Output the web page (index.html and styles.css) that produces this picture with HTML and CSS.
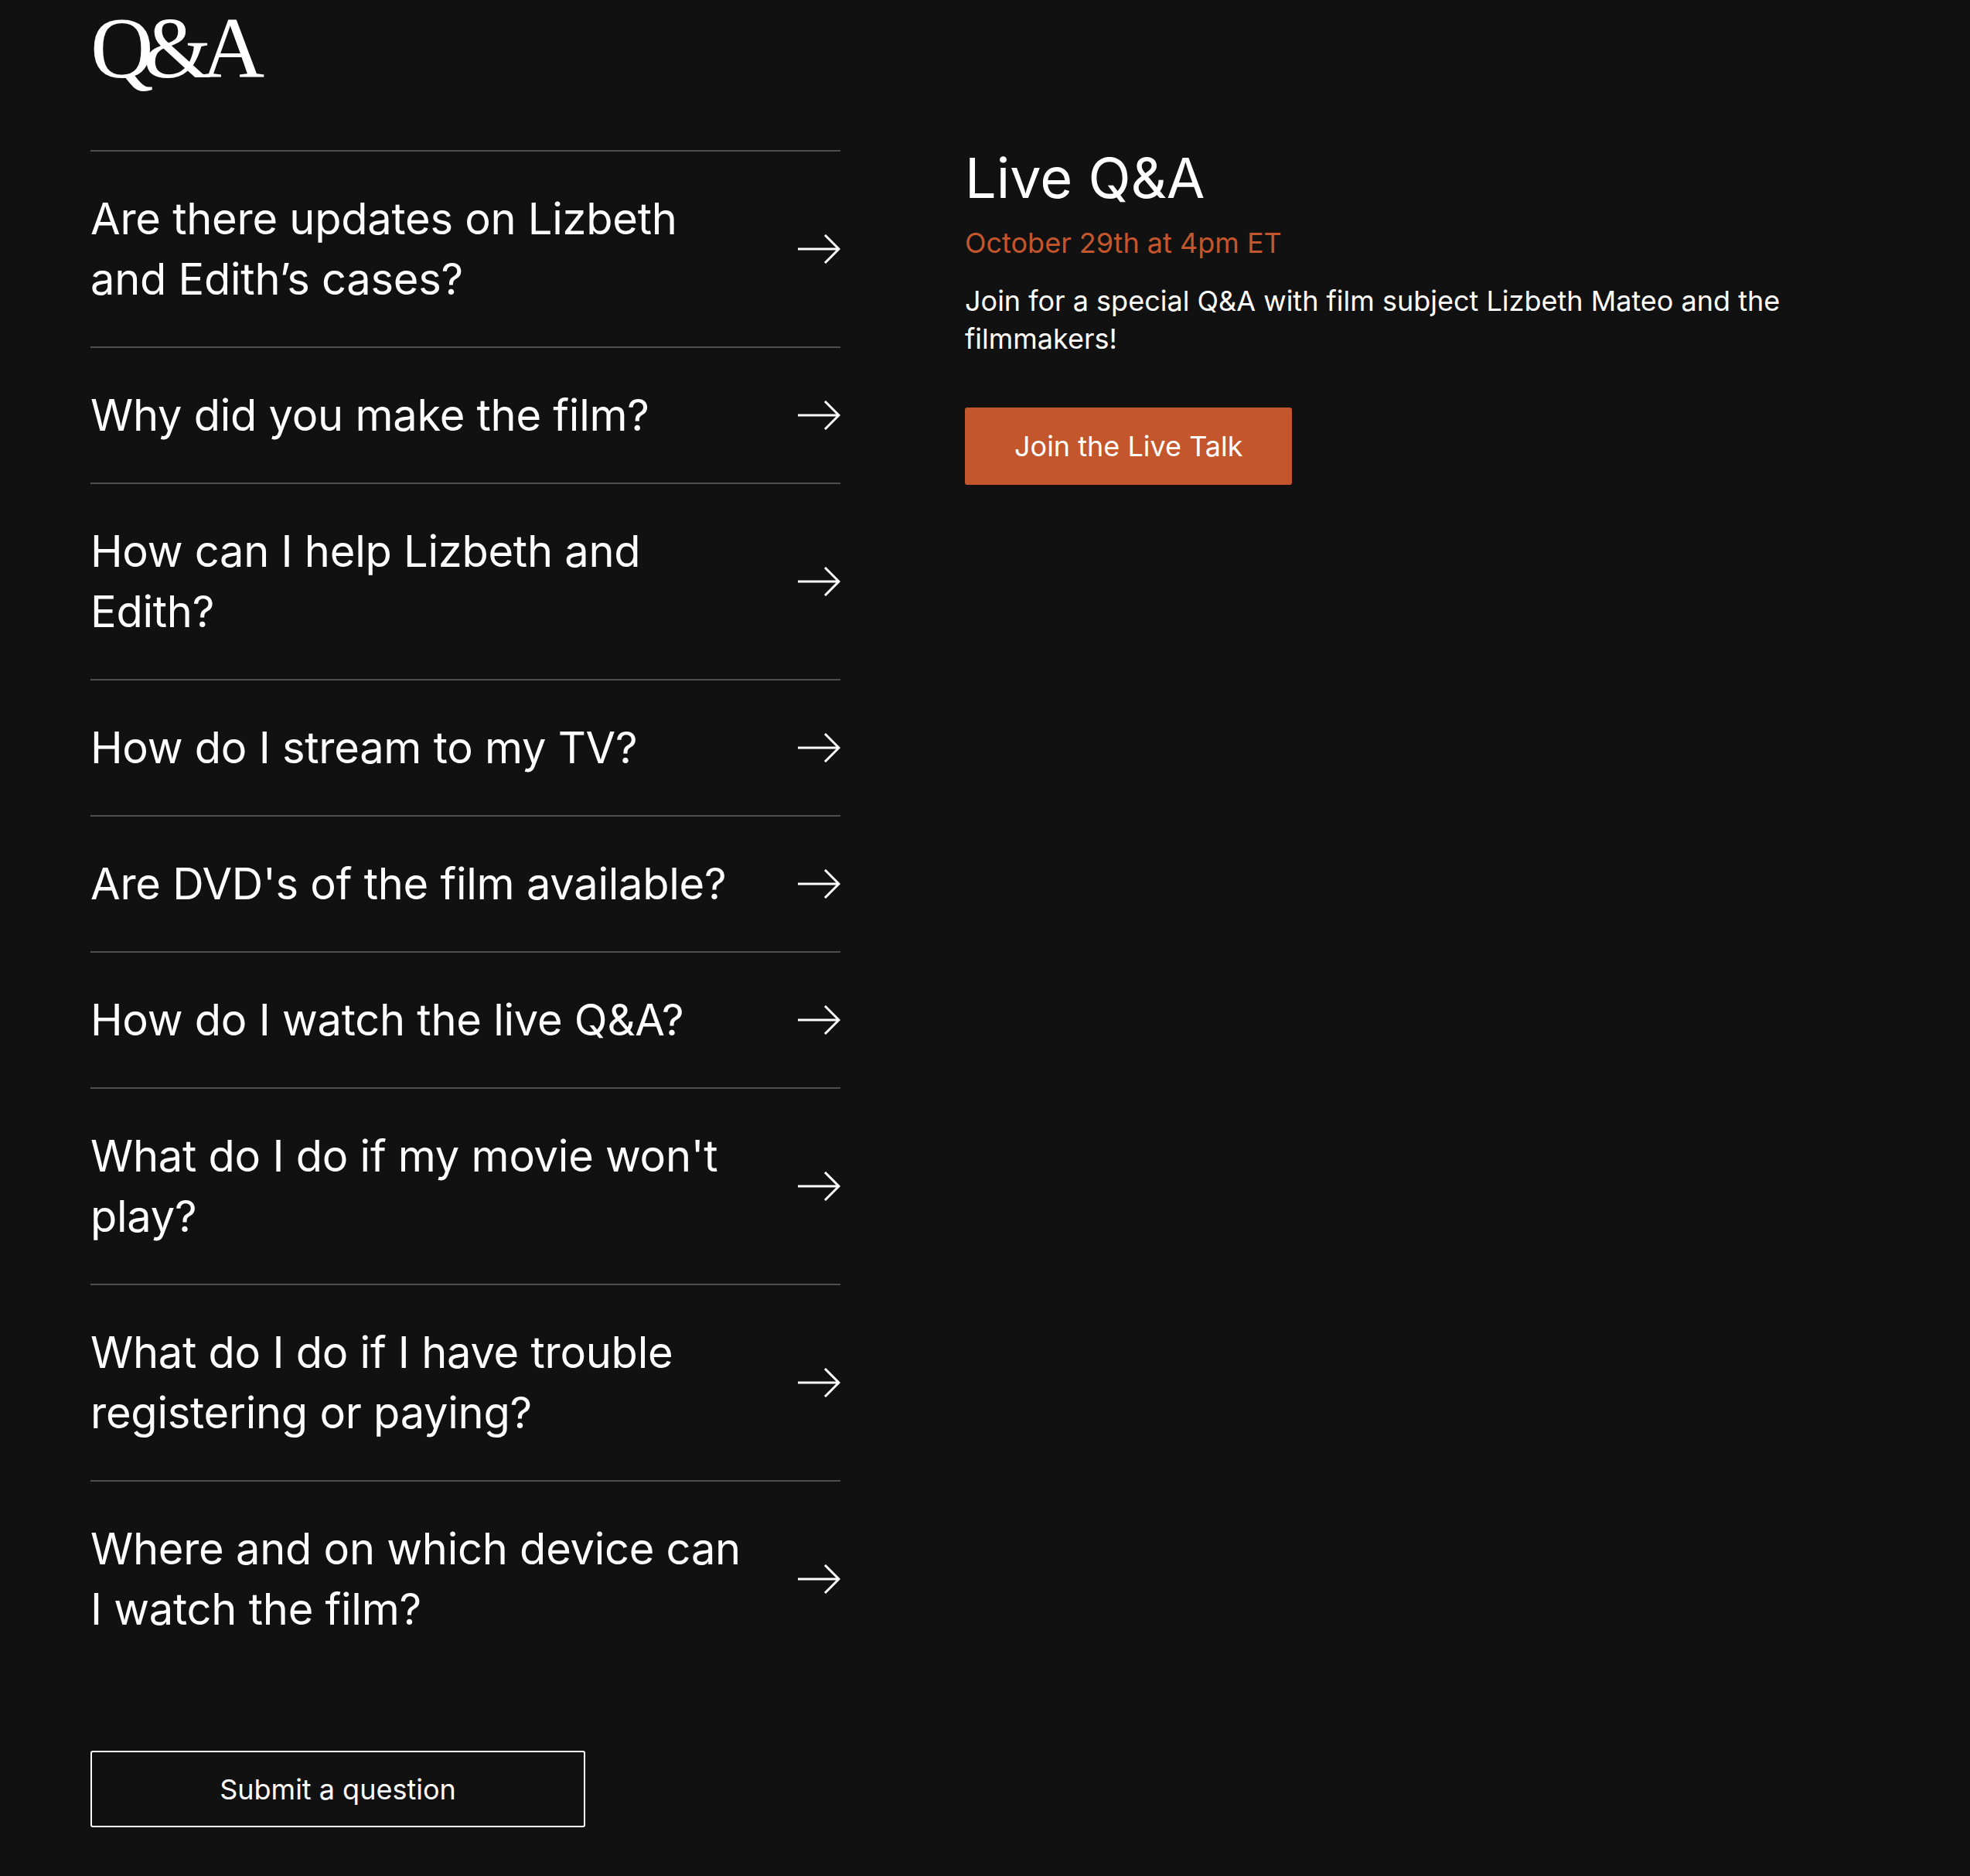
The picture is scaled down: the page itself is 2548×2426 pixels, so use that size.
FILE: index.html
```html
<!DOCTYPE html>
<html lang="en">
<head>
  <meta charset="UTF-8" />
  <meta name="viewport" content="width=device-width, initial-scale=1.0"/>
  <title>Q&amp;A</title>
  <link rel="stylesheet" href="styles.css">
</head>
<body>
  <div class="page">
    <div class="faq">
      <h1 class="faq-title">Q&amp;A</h1>

      <ul class="faq-list">
        <li class="faq-item">
          <span class="faq-question">Are there updates on Lizbeth and Edith’s cases?</span>
          <svg class="arrow" viewBox="0 0 56 38"><path d="M1 19H54M36 1L54 19L36 37"/></svg>
        </li>
        <li class="faq-item">
          <span class="faq-question">Why did you make the film?</span>
          <svg class="arrow" viewBox="0 0 56 38"><path d="M1 19H54M36 1L54 19L36 37"/></svg>
        </li>
        <li class="faq-item">
          <span class="faq-question">How can I help Lizbeth and Edith?</span>
          <svg class="arrow" viewBox="0 0 56 38"><path d="M1 19H54M36 1L54 19L36 37"/></svg>
        </li>
        <li class="faq-item">
          <span class="faq-question">How do I stream to my TV?</span>
          <svg class="arrow" viewBox="0 0 56 38"><path d="M1 19H54M36 1L54 19L36 37"/></svg>
        </li>
        <li class="faq-item">
          <span class="faq-question">Are DVD's of the film available?</span>
          <svg class="arrow" viewBox="0 0 56 38"><path d="M1 19H54M36 1L54 19L36 37"/></svg>
        </li>
        <li class="faq-item">
          <span class="faq-question">How do I watch the live Q&amp;A?</span>
          <svg class="arrow" viewBox="0 0 56 38"><path d="M1 19H54M36 1L54 19L36 37"/></svg>
        </li>
        <li class="faq-item">
          <span class="faq-question">What do I do if my movie won't play?</span>
          <svg class="arrow" viewBox="0 0 56 38"><path d="M1 19H54M36 1L54 19L36 37"/></svg>
        </li>
        <li class="faq-item">
          <span class="faq-question">What do I do if I have trouble registering or paying?</span>
          <svg class="arrow" viewBox="0 0 56 38"><path d="M1 19H54M36 1L54 19L36 37"/></svg>
        </li>
        <li class="faq-item">
          <span class="faq-question">Where and on which device can I watch the film?</span>
          <svg class="arrow" viewBox="0 0 56 38"><path d="M1 19H54M36 1L54 19L36 37"/></svg>
        </li>
      </ul>

      <button class="btn-outline" type="button">Submit a question</button>
    </div>

    <div class="live">
      <h2 class="live-title">Live Q&amp;A</h2>
      <p class="live-date">October 29th at 4pm ET</p>
      <p class="live-text">Join for a special Q&amp;A with film subject Lizbeth Mateo and the filmmakers!</p>
      <button class="btn-primary" type="button">Join the Live Talk</button>
    </div>
  </div>
</body>
</html>
```

FILE: styles.css
```css
body {
  margin: 0;
  background: #111111;
  color: #ffffff;
  font-family: Inter, "Noto Sans", sans-serif;
}
.page {
  display: flex;
  gap: 161px;
  padding: 5px 117px 63px;
}
.faq {
  width: 970px;
  flex-shrink: 0;
}
.faq-title {
  margin: 0 0 76px;
  font-family: "Liberation Serif", "DejaVu Serif", serif;
  font-weight: 400;
  font-size: 113px;
  line-height: 1;
  letter-spacing: -13px;
}
.faq-list {
  list-style: none;
  margin: 0;
  padding: 0;
}
.faq-item {
  display: flex;
  align-items: center;
  justify-content: space-between;
  padding: 48px 0;
  border-top: 2px solid #4f4f4f;
}
.faq-question {
  width: 860px;
  font-size: 56px;
  line-height: 78px;
  letter-spacing: -0.25px;
}
.arrow {
  width: 56px;
  height: 38px;
  fill: none;
  stroke: #ffffff;
  stroke-width: 3;
}
.btn-outline {
  margin-top: 96px;
  width: 640px;
  height: 99px;
  background: transparent;
  color: #ffffff;
  border: 2px solid #ffffff;
  border-radius: 3px;
  font-family: Inter, sans-serif;
  font-size: 36px;
  cursor: pointer;
}
.live {
  flex: 1;
  padding-top: 189px;
}
.live-title {
  margin: 0;
  font-size: 72px;
  font-weight: 400;
  line-height: 1;
}
.live-date {
  margin: 23px 0 0;
  color: #c4562d;
  font-size: 36px;
  line-height: 50px;
}
.live-text {
  margin: 26px 0 0;
  font-size: 36px;
  line-height: 49px;
}
.btn-primary {
  margin-top: 64px;
  height: 100px;
  padding: 0 64px;
  background: #c4562d;
  color: #ffffff;
  border: none;
  border-radius: 3px;
  font-family: Inter, sans-serif;
  font-size: 36px;
  cursor: pointer;
}
```
